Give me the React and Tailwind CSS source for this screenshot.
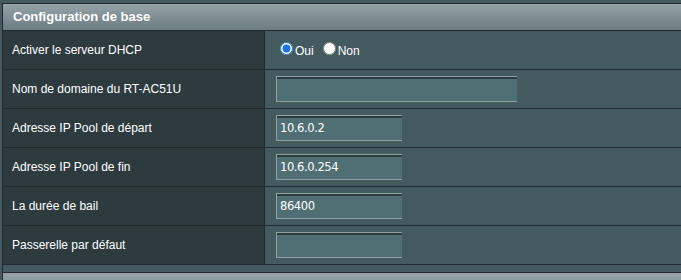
import React from 'react';

const rows = [
  { label: 'Activer le serveur DHCP', type: 'radio' },
  { label: 'Nom de domaine du RT-AC51U', type: 'input', wide: true, value: '' },
  { label: 'Adresse IP Pool de départ', type: 'input', value: '10.6.0.2' },
  { label: 'Adresse IP Pool de fin', type: 'input', value: '10.6.0.254' },
  { label: 'La durée de bail', type: 'input', value: '86400' },
  { label: 'Passerelle par défaut', type: 'input', value: '' },
];

const Field = ({ value, wide }) => (
  <div
    className={`${wide ? 'w-[241px]' : 'w-[126px]'} h-[26px] bg-[#4f6f74] border-t border-l border-b border-[#8fa2a5] shadow-[inset_0_2px_0_#2c3b3e] flex items-center pl-[3px] pt-[1px] text-[11.5px] text-white`}
    style={{ fontFamily: '"DejaVu Sans", sans-serif', letterSpacing: '-0.4px' }}
  >
    {value}
  </div>
);

const App = () => {
  return (
    <div className="w-[681px] h-[280px] overflow-hidden bg-[#475a5f] pt-[3px] pl-[2px]" style={{ fontFamily: '"Liberation Sans", Arial, sans-serif' }}>
      <div className="w-[760px] border border-[#222a2d]">
        {/* en-tête */}
        <div className="h-[27px] bg-gradient-to-b from-[#96a4a8] to-[#6b7b80] border-b border-[#222a2d] flex items-center pl-[10px] text-[13px] font-bold text-white">
          Configuration de base
        </div>
        {rows.map((r, i) => (
          <div key={i} className="flex h-[39px] border-b border-[#222a2d]">
            <div className="w-[262px] shrink-0 bg-[#2d3b3f] border-r border-[#222a2d] flex items-center pl-[9px] text-[12px] text-white">
              {r.label}
            </div>
            <div className="flex-1 bg-[#435a5f] flex items-center pl-[11px]">
              {r.type === 'radio' ? (
                <div className="flex items-center text-[12px] text-white">
                  <input type="radio" name="dhcp" defaultChecked className="m-0 ml-[4px] mr-[2px] mb-[3px] w-[13px] h-[13px] accent-[#1a73e8]" />
                  <span className="mr-[9px] pt-[2px]">Oui</span>
                  <input type="radio" name="dhcp" className="m-0 mr-[2px] mb-[3px] w-[13px] h-[13px]" />
                  <span className="pt-[2px]">Non</span>
                </div>
              ) : (
                <Field value={r.value} wide={r.wide} />
              )}
            </div>
          </div>
        ))}
        <div className="h-[8px] bg-[#475a5f] border-b border-[#222a2d]" />
        <div className="h-[30px] bg-gradient-to-b from-[#96a4a8] to-[#6b7b80]" />
      </div>
    </div>
  );
};

export default App;
